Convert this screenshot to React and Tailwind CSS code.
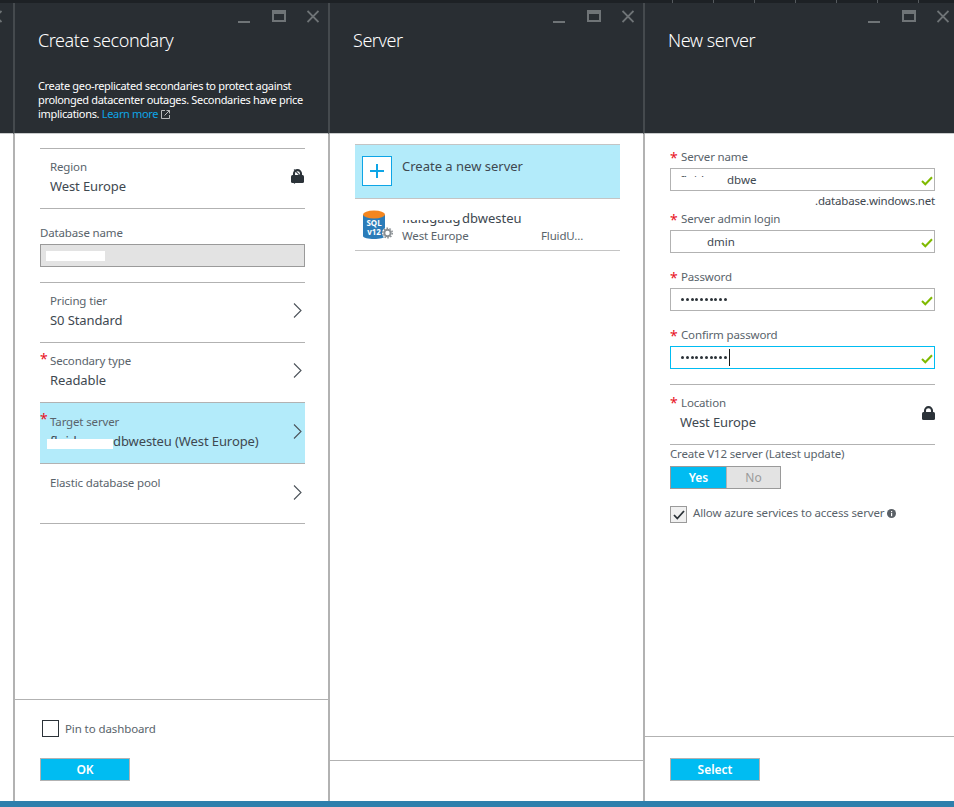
import { Fragment } from "react";

function WindowControls() {
  return (
    <div className="absolute top-[5px] right-[9px] flex items-start gap-[21px]">
      <svg width="12" height="16" viewBox="0 0 12 16">
        <rect x="0" y="13" width="12" height="2" fill="#6f7477" />
      </svg>
      <svg width="14" height="13" viewBox="0 0 14 13" className="mt-[2px] ml-[1px]">
        <rect x="1" y="1" width="12" height="10" fill="none" stroke="#6f7477" strokeWidth="2" />
        <rect x="1" y="1" width="12" height="3" fill="#6f7477" />
      </svg>
      <CloseIcon />
    </div>
  );
}

function CloseIcon() {
  return (
    <svg width="12" height="13" viewBox="0 0 12 13" className="mt-[2px] shrink-0">
      <path d="M0.5 1 L11.5 12 M11.5 1 L0.5 12" stroke="#6f7477" strokeWidth="1.8" fill="none" />
    </svg>
  );
}

function Chevron({ className }) {
  return (
    <svg width="9" height="15" viewBox="0 0 9 15" className={className}>
      <path d="M1 0.5 L8 7.5 L1 14.5" fill="none" stroke="#4b5259" strokeWidth="1.1" />
    </svg>
  );
}

function Lock({ className }) {
  return (
    <svg width="13" height="14" viewBox="0 0 13 14" className={className}>
      <path d="M3 7 V4.6 a3.5 3.5 0 0 1 7 0 V7" fill="none" stroke="#2b3238" strokeWidth="2.1" />
      <rect x="0" y="6" width="13" height="8" rx="1.5" fill="#2b3238" />
    </svg>
  );
}

function Star({ className }) {
  return <span className={`absolute text-[14px] leading-none text-[#e81123] ${className}`}>*</span>;
}

function Check() {
  return (
    <svg width="12" height="10" viewBox="0 0 12 10" className="absolute top-[7px] right-[1px]">
      <path d="M1 5 L4.3 8.3 L11 1.2" fill="none" stroke="#7fba00" strokeWidth="2" />
    </svg>
  );
}

// text that was blanked out in the screenshot, only bits of the letters show
function Redacted({ text, className, mask }) {
  return (
    <span className={`relative inline-block align-bottom whitespace-nowrap ${className}`}>
      {text}
      <span className={`absolute bg-white ${mask}`} />
    </span>
  );
}

function Blade({ title, description, footer, footerHeight, children }) {
  return (
    <section className="flex w-[315px] shrink-0 flex-col">
      <header className="relative h-[131px] shrink-0 border-b border-l-2 border-b-[#c9cbcc] border-l-[#454a4e] bg-[#292e33] pl-[23px] text-white">
        <WindowControls />
        <h2 className="pt-[24px] text-[18px] leading-[27px] font-light tracking-[-0.45px]">{title}</h2>
        {description}
      </header>
      <div className="min-h-0 flex-1 border-l-2 border-[#b2b2b2] bg-white">{children}</div>
      <div className={`shrink-0 border-t border-l-2 border-[#b2b2b2] bg-white ${footerHeight}`}>{footer}</div>
    </section>
  );
}

function SettingRow({ label, value, required, active, height = "h-[60px]" }) {
  return (
    <div
      className={`relative flex items-center justify-between border-t border-[#b2b2b2] pr-[3px] pb-[4px] pl-[10px] ${height} ${
        active ? "bg-[#b3ebfa]" : ""
      }`}
    >
      {required && <Star className="top-[9px] left-0" />}
      <div className="self-start pt-[10px]">
        <div className="text-[11.5px] leading-[16px] tracking-[-0.15px] text-[#59636b]">{label}</div>
        <div className="mt-[2px] text-[13px] leading-[18px] tracking-[-0.1px] text-[#3e4850]">{value}</div>
      </div>
      <Chevron />
    </div>
  );
}

function Field({ label, children, focus }) {
  return (
    <div>
      <div className="relative pl-[11px] text-[11.5px] leading-[16px] tracking-[-0.15px] text-[#59636b]">
        <Star className="top-[2px] left-0" />
        {label}
      </div>
      <div
        className={`relative mt-[3px] h-[23px] border pl-[9px] text-[11.5px] leading-[21px] text-[#3e4850] ${
          focus ? "border-[#00bcf2]" : "border-[#b2b2b2]"
        }`}
      >
        {children}
        <Check />
      </div>
    </div>
  );
}

function Dots({ caret }) {
  return (
    <div className="flex h-full items-center gap-[1.75px] pl-[1px]">
      {Array.from({ length: 10 }).map((_, i) => (
        <span key={i} className="h-[3px] w-[3px] rounded-full bg-[#2b3238]" />
      ))}
      {caret && <span className="h-[17px] w-px bg-[#1a1a1a]" />}
    </div>
  );
}

function PrimaryButton({ children }) {
  return (
    <button className="block h-[23px] w-[90px] border border-[#b2b2b2] bg-[#00bcf2] text-[12px] leading-none font-semibold text-white">
      {children}
    </button>
  );
}

function SqlIcon() {
  return (
    <svg width="32" height="34" viewBox="0 0 32 34" className="shrink-0">
      <path d="M1 6 V27 C1 31 23 31 23 27 V6 Z" fill="#2b7cb9" />
      <ellipse cx="12" cy="5.5" rx="11" ry="4" fill="#f4861f" />
      <text x="12" y="16.5" textAnchor="middle" fontSize="8" fontWeight="700" fill="#fff" fontFamily="Noto Sans, sans-serif">SQL</text>
      <text x="12" y="26" textAnchor="middle" fontSize="8" fontWeight="700" fill="#fff" fontFamily="Noto Sans, sans-serif">v12</text>
      <circle cx="25.5" cy="24" r="5.5" fill="#ffffff" />
      <circle cx="25.5" cy="24" r="3.2" fill="none" stroke="#8a8f93" strokeWidth="2" />
      <circle cx="25.5" cy="24" r="4.8" fill="none" stroke="#8a8f93" strokeWidth="1.4" strokeDasharray="1.6 1.4" />
    </svg>
  );
}

export default function App() {
  return (
    <div className="flex h-[807px] w-[954px] flex-col overflow-hidden bg-white font-['Noto_Sans',sans-serif]">
      <div className="flex h-[3px] shrink-0 gap-[40px] bg-[#1d2125] pl-[672px]">
        {Array.from({ length: 7 }).map((_, i) => (
          <span key={i} className="h-full w-px bg-[#555a5e]" />
        ))}
      </div>

      <div className="flex min-h-0 flex-1">
        <div className="flex w-[13px] shrink-0 flex-col">
          <div className="flex h-[131px] justify-end overflow-hidden border-b border-[#c9cbcc] bg-[#292e33] pt-[5px]">
            <div className="ml-[-10px] w-[13px] shrink-0 translate-x-[-10px]">
              <CloseIcon />
            </div>
          </div>
          <div className="flex-1 bg-white" />
        </div>

        <Blade
          title="Create secondary"
          footerHeight="h-[102px]"
          description={
            <p className="mt-[25px] w-[270px] text-[11px] leading-[14px] tracking-[-0.33px]">
              Create geo-replicated secondaries to protect against prolonged datacenter outages. Secondaries have
              price implications. <span className="text-[#0ea5e6]">Learn more</span>{" "}
              <svg width="9" height="9" viewBox="0 0 9 9" className="inline align-[-1px]">
                <path d="M4 .5 H.5 V8.5 H8.5 V5 M3.5 5.5 L8.5 .5 M5.5 .5 H8.5 V3.5" fill="none" stroke="#c8cacc" strokeWidth="0.9" />
              </svg>
            </p>
          }
          footer={
            <div className="pt-[20px] pl-[25px]">
              <div className="flex items-center gap-[6px] pl-[2px]">
                <span className="h-[17px] w-[17px] border border-[#2b3238]" />
                <span className="text-[11.5px] leading-[16px] tracking-[-0.1px] text-[#59636b]">Pin to dashboard</span>
              </div>
              <div className="mt-[21px]">
                <PrimaryButton>OK</PrimaryButton>
              </div>
            </div>
          }
        >
          <div className="mx-[25px] w-[265px] pt-[14px]">
            <div className="relative">
              <SettingRow label="Region" value="West Europe" />
              <Lock className="absolute top-[21px] right-[1px]" />
            </div>
            <div className="h-[74px] border-t border-[#b2b2b2] pt-[16px]">
              <div className="text-[11.5px] leading-[16px] tracking-[-0.15px] text-[#59636b]">Database name</div>
              <div className="mt-[3px] flex h-[23px] items-center border border-[#9a9a9a] bg-[#e3e3e3] pl-[5px]">
                <span className="h-[10px] w-[59px] bg-white" />
              </div>
            </div>
            <SettingRow label="Pricing tier" value="S0 Standard" />
            <SettingRow label="Secondary type" value="Readable" required />
            <SettingRow
              label="Target server"
              required
              active
              height="h-[61px] pt-[1px]"
              value={
                <Fragment>
                  <Redacted text="fluidgau" className="w-[63px]" mask="top-[7px] -left-[3px] h-[10px] w-[66px]" />
                  dbwesteu (West Europe)
                </Fragment>
              }
            />
            <div className="border-b border-[#b2b2b2]">
              <SettingRow label="Elastic database pool" value="" height="h-[60px] pt-[1px]" />
            </div>
          </div>
        </Blade>

        <Blade title="Server" footerHeight="h-[41px]" footer={null}>
          <div className="mx-[25px] w-[265px] pt-[10px]">
            <div className="flex h-[54px] gap-[10px] border-t border-[#c4c4c4] bg-[#b3ebfa] pt-[11px] pl-[7px]">
              <span className="flex h-[30px] w-[30px] items-center justify-center border border-[#0ea5e6] bg-white">
                <svg width="14" height="14" viewBox="0 0 14 14">
                  <path d="M7 0 V14 M0 7 H14" stroke="#0ea5e6" strokeWidth="2" />
                </svg>
              </span>
              <span className="text-[13px] leading-[20px] text-[#3e4850]">Create a new server</span>
            </div>
            <div className="flex h-[53px] gap-[8px] border-y border-[#c4c4c4] pt-[10px] pl-[7px]">
              <SqlIcon />
              <div className="min-w-0 flex-1">
                <div className="text-[13px] leading-[18px] text-[#3e4850]">
                  <Redacted text="fluidgaug" className="w-[60px] overflow-hidden" mask="top-0 left-0 h-[11px] w-[60px]" />
                  dbwesteu
                </div>
                <div className="flex pr-[10px] text-[11.5px] leading-[17px] tracking-[-0.15px] text-[#59636b]">
                  <span className="w-[139px]">West Europe</span>
                  <span>FluidU...</span>
                </div>
              </div>
            </div>
          </div>
        </Blade>

        <Blade
          title="New server"
          footerHeight="h-[65px]"
          footer={
            <div className="pt-[21px] pl-[25px]">
              <PrimaryButton>Select</PrimaryButton>
            </div>
          }
        >
          <div className="mx-[25px] w-[265px] pt-[15px]">
            <Field label="Server name">
              <Redacted text="fluidga" className="w-[47px] overflow-hidden" mask="top-[8px] left-0 h-[13px] w-[47px]" />
              dbwe
            </Field>
            <div className="mt-[2px] text-right text-[11.5px] leading-[16px] tracking-[-0.2px] text-[#3e4850]">
              .database.windows.net
            </div>
            <div className="mt-[2px]">
              <Field label="Server admin login">
                <span className="inline-block w-[27px]" />
                dmin
              </Field>
            </div>
            <div className="mt-[16px]">
              <Field label="Password">
                <Dots />
              </Field>
            </div>
            <div className="mt-[16px]">
              <Field label="Confirm password" focus>
                <Dots caret />
              </Field>
            </div>
            <div className="relative mt-[15px] h-[61px] border-y border-[#b2b2b2] pt-[10px]">
              <Star className="top-[11px] left-0" />
              <Lock className="absolute top-[21px] right-0" />
              <div className="pl-[11px] text-[11.5px] leading-[16px] tracking-[-0.15px] text-[#59636b]">Location</div>
              <div className="mt-[2px] pl-[10px] text-[13px] leading-[18px] tracking-[-0.1px] text-[#3e4850]">West Europe</div>
            </div>
            <div className="pt-[1px] text-[11.5px] leading-[16px] tracking-[-0.15px] text-[#59636b]">
              Create V12 server (Latest update)
            </div>
            <div className="mt-[4px] flex h-[23px] w-[111px] border border-[#9a9a9a] text-[12px]">
              <span className="flex w-[55px] items-center justify-center bg-[#00bcf2] font-semibold text-white">Yes</span>
              <span className="flex flex-1 items-center justify-center border-l border-[#b2b2b2] bg-[#e3e3e3] text-[#9a9a9a]">No</span>
            </div>
            <div className="mt-[17px] flex items-center gap-[6px]">
              <span className="flex h-[17px] w-[17px] items-center justify-center border border-[#9a9a9a] bg-[#f0f0f0]">
                <svg width="12" height="10" viewBox="0 0 12 10">
                  <path d="M1 5 L4.3 8.5 L11 1" fill="none" stroke="#2b3238" strokeWidth="1.8" />
                </svg>
              </span>
              <span className="-mt-[3px] text-[11.5px] leading-[16px] tracking-[-0.15px] text-[#59636b]">
                Allow azure services to access server
              </span>
              <svg width="9" height="9" viewBox="0 0 9 9" className="-mt-[3px] -ml-[3px]">
                <circle cx="4.5" cy="4.5" r="4.5" fill="#5a6066" />
                <rect x="4" y="4" width="1.2" height="3.2" fill="#fff" />
                <rect x="4" y="2" width="1.2" height="1.2" fill="#fff" />
              </svg>
            </div>
          </div>
        </Blade>
      </div>

      <div className="h-[6px] shrink-0 bg-[#2e7fac]" />
    </div>
  );
}
